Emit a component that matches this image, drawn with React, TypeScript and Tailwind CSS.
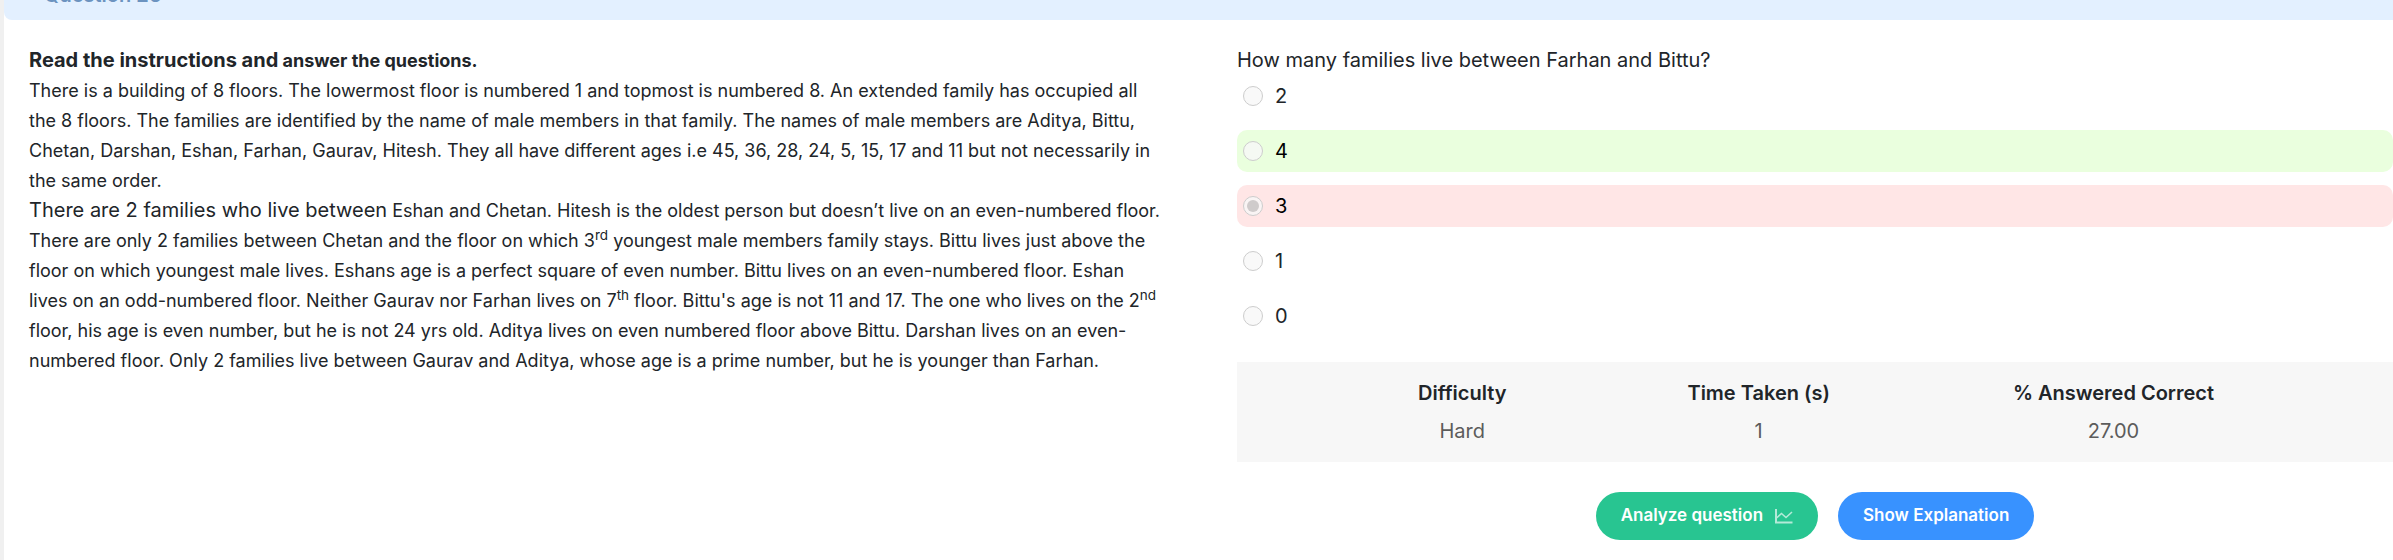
import clsx from 'clsx'

interface Option { label: string; state?: 'correct' | 'wrong' }

const options: Option[] = [
  { label: '2' },
  { label: '4', state: 'correct' },
  { label: '3', state: 'wrong' },
  { label: '1' },
  { label: '0' },
]

function OptionRow({ option }: { option: Option }) {
  return (
    <label
      className={clsx(
        'flex h-[42px] items-center gap-3 rounded-[10px] px-1.5 text-[20px]',
        option.state === 'correct' && 'bg-[#eaffde] text-black',
        option.state === 'wrong' && 'bg-[#ffe6e6] text-black'
      )}
    >
      <input
        type="radio"
        name="answer"
        disabled
        checked={option.state === 'wrong'}
        readOnly
        className="size-5 appearance-none rounded-full border border-[#cdcdcd] bg-[#f8f8f8]/80 p-[3px] before:block before:size-full before:rounded-full checked:before:bg-[#cfcbcb]"
      />
      <span>{option.label}</span>
    </label>
  )
}

function ChartIcon() {
  return (
    <svg width="18" height="18" viewBox="0 0 18 18" fill="none" stroke="currentColor" className="opacity-65">
      <path d="M1 2v13.500h16.500" strokeWidth="2" />
      <path d="M1.500 11l5-4.500 4.500 4 6-5.500" strokeWidth="1.600" />
    </svg>
  )
}

function Passage() {
  return (
    <section className="pr-5 text-[18px] leading-[30px]">
      <h2 className="font-bold">
        <span className="text-[20px]">Read the instructions and</span> answer the questions.
      </h2>
      <p>
        There is a building of 8 floors. The lowermost floor is numbered 1 and topmost is numbered 8. An extended
        family has occupied all the 8 floors. The families are identified by the name of male members in that family.
        The names of male members are Aditya, Bittu, Chetan, Darshan, Eshan, Farhan, Gaurav, Hitesh. They all have
        different ages i.e 45, 36, 28, 24, 5, 15, 17 and 11 but not necessarily in the same order.
      </p>
      <p>
        <span className="text-[20px] leading-none">There are 2 families who live between</span> Eshan and Chetan.
        Hitesh is the oldest person but doesn’t live on an even-numbered floor. There are only 2 families between
        Chetan and the floor on which 3<sup>rd</sup> youngest male members family stays. Bittu lives just above the
        floor on which youngest male lives. Eshans age is a perfect square of even number. Bittu lives on an
        even-numbered floor. Eshan lives on an odd-numbered floor. Neither Gaurav nor Farhan lives on
        7<sup>th</sup> floor. Bittu's age is not 11 and 17. The one who lives on the 2<sup>nd</sup> floor, his age is
        even number, but he is not 24 yrs old. Aditya lives on even numbered floor above Bittu. Darshan lives on an
        even-numbered floor. Only 2 families live between Gaurav and Aditya, whose age is a prime number, but he is
        younger than Farhan.
      </p>
    </section>
  )
}

export default function App() {
  return (
    <div className="min-h-screen bg-[#f0f0f0] pl-1 font-['Inter',sans-serif] text-[#212529]">
      <main className="min-h-screen bg-white">
        <header className="h-5 overflow-hidden rounded-bl-lg bg-[#e3f0ff] pl-10">
          <h1 className="-mt-[18px] text-[20px] font-semibold leading-[26px] text-[#6c93c0]">Question 26</h1>
        </header>
        <div className="grid grid-cols-2 gap-[52px] pl-[25px] pt-[25px]">
          <Passage />
          <section>
            <p className="text-[20px] leading-[30px]">How many families live between Farhan and Bittu?</p>
            <fieldset className="flex flex-col gap-[13px]">
              {options.map(o => <OptionRow key={o.label} option={o} />)}
            </fieldset>
            <div className="mt-[25px] bg-[#f7f7f7] py-3 pl-[94px] pr-[90px]">
              <table className="w-full table-fixed text-[20px] leading-[38px]">
                <thead>
                  <tr>
                    <th className="w-[27%] font-semibold">Difficulty</th>
                    <th className="w-[34%] font-semibold">Time Taken (s)</th>
                    <th className="w-[39%] font-semibold">% Answered Correct</th>
                  </tr>
                </thead>
                <tbody>
                  <tr className="text-center text-[#5c5c5c]">
                    <td>Hard</td>
                    <td>1</td>
                    <td>27.00</td>
                  </tr>
                </tbody>
              </table>
            </div>
            <div className="mt-[30px] flex justify-center gap-5 text-[17px] font-semibold text-white">
              <button className="flex h-12 items-center gap-3 rounded-full bg-[#28c591] px-[25px]">
                Analyze question
                <ChartIcon />
              </button>
              <button className="h-12 rounded-full bg-[#3892ff] px-[25px]">Show Explanation</button>
            </div>
          </section>
        </div>
      </main>
    </div>
  )
}
